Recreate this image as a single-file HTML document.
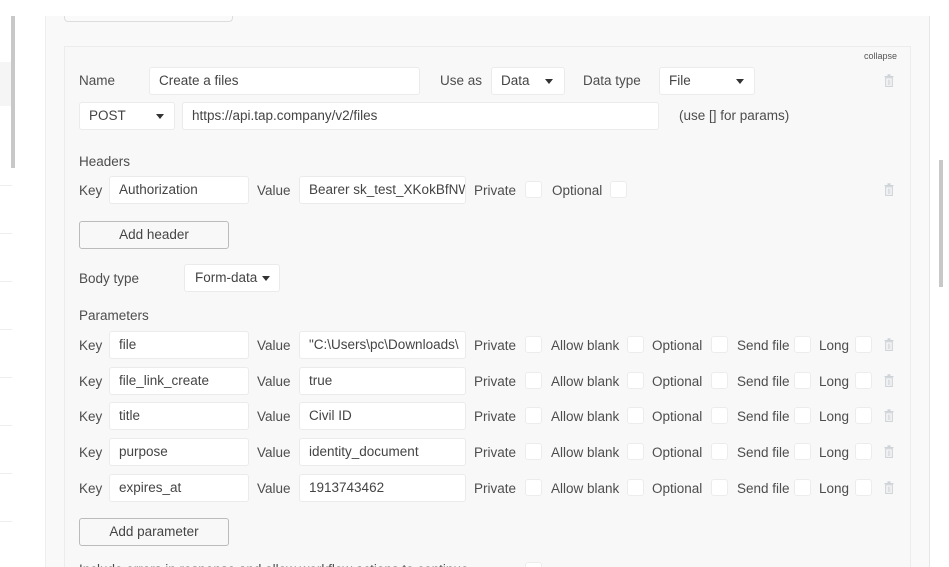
<!DOCTYPE html>
<html style="width:949px;height:567px;overflow:hidden"><head><meta charset="utf-8"><style>
*{box-sizing:border-box;margin:0;padding:0}
body{width:949px;height:567px;overflow:hidden;background:#fff;font-family:"Liberation Sans",sans-serif;font-size:13.5px;color:#4d4d4d;position:relative}
.a{position:absolute;white-space:nowrap}
.t{position:absolute;white-space:nowrap;line-height:16px}
.in{position:absolute;background:#fff;border:1px solid #ebebeb;border-radius:3px;height:28px;line-height:26px;padding-left:9px;overflow:hidden;white-space:nowrap;color:#444}
.btn{position:absolute;background:#f8f8f8;border:1px solid #bbb;border-radius:3px;height:28px;line-height:26px;text-align:center;color:#444}
.cb{position:absolute;width:17px;height:17px;background:#fff;border:1px solid #ececec;border-radius:3px}
.car{position:absolute;width:0;height:0;border-left:4px solid transparent;border-right:4px solid transparent;border-top:5px solid #333}
.tr{position:absolute;width:10px;height:13px}
</style></head><body>
<div class="a" style="left:0;top:16px;width:45px;height:551px;background:#fff"></div>
<div class="a" style="left:0;top:62px;width:11px;height:44px;background:#f5f5f5"></div>
<div class="a" style="left:11px;top:16px;width:4px;height:152px;background:#c8c8c8"></div>
<div class="a" style="left:0;top:185px;width:12px;height:1px;background:#eee"></div>
<div class="a" style="left:0;top:233px;width:12px;height:1px;background:#eee"></div>
<div class="a" style="left:0;top:281px;width:12px;height:1px;background:#eee"></div>
<div class="a" style="left:0;top:329px;width:12px;height:1px;background:#eee"></div>
<div class="a" style="left:0;top:377px;width:12px;height:1px;background:#eee"></div>
<div class="a" style="left:0;top:425px;width:12px;height:1px;background:#eee"></div>
<div class="a" style="left:0;top:473px;width:12px;height:1px;background:#eee"></div>
<div class="a" style="left:0;top:521px;width:12px;height:1px;background:#eee"></div>
<div class="a" style="left:45px;top:16px;width:885px;height:551px;background:#f9f9f9;border-left:1px solid #eee;border-right:1px solid #e6e6e6"></div>
<div class="a" style="left:0;top:0;width:949px;height:16px;background:#fff"></div>
<div class="a" style="left:64px;top:16px;width:169px;height:6px;border:1px solid #ddd;border-top:none;border-radius:0 0 4px 4px;background:#fafafa"></div>
<div class="a" style="left:939px;top:160px;width:4px;height:127px;background:#c8c8c8"></div>
<div class="a" style="left:64px;top:46px;width:847px;height:530px;border:1px solid #ececec;background:#f8f8f8"></div>
<div class="t" style="left:864px;top:48px;font-size:9px;color:#555">collapse</div>

<div class="t" style="left:79px;top:73px">Name</div>
<div class="in" style="left:149px;top:67px;width:271px">Create a files</div>
<div class="t" style="left:440px;top:73px">Use as</div>
<div class="in" style="left:491px;top:67px;width:74px">Data</div><div class="car" style="left:545px;top:79px"></div>
<div class="t" style="left:583px;top:73px">Data type</div>
<div class="in" style="left:659px;top:67px;width:96px">File</div><div class="car" style="left:736px;top:79px"></div>

<div class="in" style="left:79px;top:102px;width:96px">POST</div><div class="car" style="left:156px;top:114px"></div>
<div class="in" style="left:182px;top:102px;width:477px">https://api.tap.company/v2/files</div>
<div class="t" style="left:679px;top:108px">(use [] for params)</div>

<div class="t" style="left:79px;top:154px">Headers</div>
<div class="t" style="left:79px;top:183px">Key</div>
<div class="in" style="left:109px;top:176px;width:140px">Authorization</div>
<div class="t" style="left:257px;top:183px">Value</div>
<div class="in" style="left:299px;top:176px;width:167px">Bearer sk_test_XKokBfNW</div>
<div class="t" style="left:474px;top:183px">Private</div><div class="cb" style="left:525px;top:181px"></div>
<div class="t" style="left:552px;top:183px">Optional</div><div class="cb" style="left:610px;top:181px"></div>

<div class="btn" style="left:79px;top:221px;width:150px">Add header</div>
<div class="t" style="left:79px;top:271px">Body type</div>
<div class="in" style="left:184px;top:264px;width:96px;padding-left:10px">Form-data</div><div class="car" style="left:262px;top:276px"></div>
<div class="t" style="left:79px;top:308px">Parameters</div>

<div id="rows"></div>
<div class="btn" style="left:79px;top:518px;width:150px">Add parameter</div>
<div class="t" style="left:79px;top:562px">Include errors in response and allow workflow actions to continue</div>
<div class="cb" style="left:525px;top:562px"></div>

<svg width="0" height="0" style="position:absolute"><defs><g id="tr"><rect x="0.5" y="2" width="9" height="1.2" fill="#cdd3d7"/><rect x="3.5" y="0.3" width="3" height="1.7" fill="#cdd3d7"/><rect x="1.7" y="3.8" width="6.6" height="8.6" fill="none" stroke="#cdd3d7" stroke-width="1.1"/><rect x="3.8" y="5.5" width="0.9" height="5.5" fill="#cdd3d7"/><rect x="5.4" y="5.5" width="0.9" height="5.5" fill="#cdd3d7"/></g></defs></svg>
<svg class="tr" style="left:884px;top:74px" viewBox="0 0 10 13"><use href="#tr"/></svg>
<svg class="tr" style="left:884px;top:183px" viewBox="0 0 10 13"><use href="#tr"/></svg>

<script>
var d=[["file","\"C:\\Users\\pc\\Downloads\\"],["file_link_create","true"],["title","Civil ID"],["purpose","identity_document"],["expires_at","1913743462"]];
var tops=[331,367,402,438,474],h="";
d.forEach(function(r,i){var y=tops[i],ty=y+7,cy=y+5;
h+='<div class="t" style="left:79px;top:'+ty+'px">Key</div><div class="in" style="left:109px;top:'+y+'px;width:140px">'+r[0]+'</div>'+
'<div class="t" style="left:257px;top:'+ty+'px">Value</div><div class="in" style="left:299px;top:'+y+'px;width:167px">'+r[1].replace(/</g,"&lt;")+'</div>'+
'<div class="t" style="left:474px;top:'+ty+'px">Private</div><div class="cb" style="left:525px;top:'+cy+'px"></div>'+
'<div class="t" style="left:551px;top:'+ty+'px">Allow blank</div><div class="cb" style="left:627px;top:'+cy+'px"></div>'+
'<div class="t" style="left:652px;top:'+ty+'px">Optional</div><div class="cb" style="left:711px;top:'+cy+'px"></div>'+
'<div class="t" style="left:737px;top:'+ty+'px">Send file</div><div class="cb" style="left:794px;top:'+cy+'px"></div>'+
'<div class="t" style="left:819px;top:'+ty+'px">Long</div><div class="cb" style="left:855px;top:'+cy+'px"></div>'+
'<svg class="tr" style="left:884px;top:'+(y+7)+'px" viewBox="0 0 10 13"><use href="#tr"/></svg>';});
document.getElementById("rows").innerHTML=h;
</script>
</body></html>
